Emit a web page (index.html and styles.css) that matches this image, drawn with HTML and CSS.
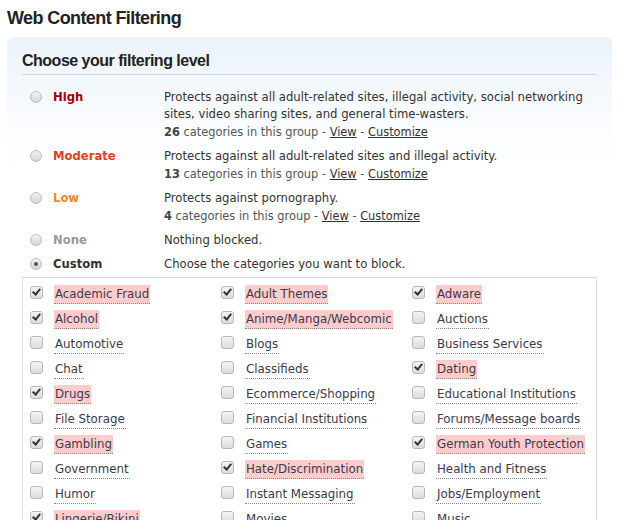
FILE: index.html
```html
<!DOCTYPE html>
<html>
<head>
<meta charset="utf-8">
<link rel="stylesheet" href="styles.css">
</head>
<body>
<h1 class="title">Web Content Filtering</h1>
<div class="panel">
  <h2 class="subtitle">Choose your filtering level</h2>
  <div class="levels">
    <div class="level">
      <span class="radio"></span>
      <span class="lname high">High</span>
      <div class="desc">
        <div class="dtext">Protects against all adult-related sites, illegal activity, social networking sites, video sharing sites, and general time-wasters.</div>
        <div class="meta"><b>26</b> categories in this group - <a>View</a> - <a>Customize</a></div>
      </div>
    </div>
    <div class="level">
      <span class="radio"></span>
      <span class="lname moderate">Moderate</span>
      <div class="desc">
        <div class="dtext">Protects against all adult-related sites and illegal activity.</div>
        <div class="meta"><b>13</b> categories in this group - <a>View</a> - <a>Customize</a></div>
      </div>
    </div>
    <div class="level">
      <span class="radio"></span>
      <span class="lname low">Low</span>
      <div class="desc">
        <div class="dtext">Protects against pornography.</div>
        <div class="meta"><b>4</b> categories in this group - <a>View</a> - <a>Customize</a></div>
      </div>
    </div>
    <div class="level">
      <span class="radio"></span>
      <span class="lname none">None</span>
      <div class="desc"><div class="dtext">Nothing blocked.</div></div>
    </div>
    <div class="level last">
      <span class="radio on"></span>
      <span class="lname custom">Custom</span>
      <div class="desc"><div class="dtext">Choose the categories you want to block.</div></div>
    </div>
  </div>
  <div class="cats">
    <div class="cat"><span class="cb on"></span><span class="cl sel">Academic Fraud</span></div>
    <div class="cat"><span class="cb on"></span><span class="cl sel">Adult Themes</span></div>
    <div class="cat"><span class="cb on"></span><span class="cl sel">Adware</span></div>
    <div class="cat"><span class="cb on"></span><span class="cl sel">Alcohol</span></div>
    <div class="cat"><span class="cb on"></span><span class="cl sel">Anime/Manga/Webcomic</span></div>
    <div class="cat"><span class="cb"></span><span class="cl">Auctions</span></div>
    <div class="cat"><span class="cb"></span><span class="cl">Automotive</span></div>
    <div class="cat"><span class="cb"></span><span class="cl">Blogs</span></div>
    <div class="cat"><span class="cb"></span><span class="cl">Business Services</span></div>
    <div class="cat"><span class="cb"></span><span class="cl">Chat</span></div>
    <div class="cat"><span class="cb"></span><span class="cl">Classifieds</span></div>
    <div class="cat"><span class="cb on"></span><span class="cl sel">Dating</span></div>
    <div class="cat"><span class="cb on"></span><span class="cl sel">Drugs</span></div>
    <div class="cat"><span class="cb"></span><span class="cl">Ecommerce/Shopping</span></div>
    <div class="cat"><span class="cb"></span><span class="cl">Educational Institutions</span></div>
    <div class="cat"><span class="cb"></span><span class="cl">File Storage</span></div>
    <div class="cat"><span class="cb"></span><span class="cl">Financial Institutions</span></div>
    <div class="cat"><span class="cb"></span><span class="cl">Forums/Message boards</span></div>
    <div class="cat"><span class="cb on"></span><span class="cl sel">Gambling</span></div>
    <div class="cat"><span class="cb"></span><span class="cl">Games</span></div>
    <div class="cat"><span class="cb on"></span><span class="cl sel">German Youth Protection</span></div>
    <div class="cat"><span class="cb"></span><span class="cl">Government</span></div>
    <div class="cat"><span class="cb on"></span><span class="cl sel">Hate/Discrimination</span></div>
    <div class="cat"><span class="cb"></span><span class="cl">Health and Fitness</span></div>
    <div class="cat"><span class="cb"></span><span class="cl">Humor</span></div>
    <div class="cat"><span class="cb"></span><span class="cl">Instant Messaging</span></div>
    <div class="cat"><span class="cb"></span><span class="cl">Jobs/Employment</span></div>
    <div class="cat"><span class="cb on"></span><span class="cl sel">Lingerie/Bikini</span></div>
    <div class="cat"><span class="cb"></span><span class="cl">Movies</span></div>
    <div class="cat"><span class="cb"></span><span class="cl">Music</span></div>
  </div>
</div>
</body>
</html>
```
FILE: styles.css
```css
html, body { margin: 0; padding: 0; background: #fff; }
body {
  padding: 0 13px 0 7px;
  font-family: "DejaVu Sans", Verdana, sans-serif;
  color: #333;
}
.title {
  font-family: "Liberation Sans", Arial, sans-serif;
  font-size: 18px;
  font-weight: bold;
  letter-spacing: -0.6px;
  color: #222;
  margin: 0;
  padding-top: 8px;
  line-height: 20px;
  height: 29px;
}
.panel {
  border-radius: 7px;
  background: linear-gradient(to bottom, #eaf2fb 0px, #fbfdff 90px, #ffffff 140px);
  padding: 14px 15px 0 15px;
}
.subtitle {
  font-family: "Liberation Sans", Arial, sans-serif;
  font-size: 16px;
  font-weight: bold;
  letter-spacing: -0.5px;
  color: #222;
  margin: 0;
  line-height: 19px;
  padding-bottom: 4px;
  border-bottom: 1px solid #d8d8d8;
}
.levels { padding-top: 14px; }
.level {
  display: grid;
  grid-template-columns: 31px 111px 1fr;
  align-items: start;
  margin-bottom: 8px;
}
.level.last { margin-bottom: 4px; }
.radio {
  width: 12px; height: 12px;
  margin: 2px 0 0 8px;
  border-radius: 50%;
  box-sizing: border-box;
  border: 1px solid #bdbdbd;
  background: linear-gradient(to bottom, #f2f2f2, #d6d6d6);
  position: relative;
}
.radio.on::after {
  content: "";
  position: absolute;
  left: 3px; top: 3px;
  width: 4px; height: 4px;
  border-radius: 50%;
  background: #555;
}
.lname {
  font-weight: bold;
  font-size: 11.6px;
  line-height: 16px;
}
.high { color: #a00000; }
.moderate { color: #e0401a; }
.low { color: #f08a1c; }
.none { color: #999; }
.custom { color: #333; }
.dtext { font-size: 11.65px; line-height: 16.5px; color: #333; }
.meta { font-size: 11.4px; line-height: 16px; color: #555; margin-top: 1.5px; }
.meta b { color: #444; }
.meta a { color: #333; text-decoration: underline; }
.cats {
  border: 1px solid #dcdcdc;
  border-bottom: none;
  display: grid;
  grid-template-columns: 191px 191px 1fr;
  padding: 4px 0 0 7px;
  background: #fff;
}
.cat {
  display: flex;
  align-items: center;
  height: 25px;
}
.cb {
  width: 13px; height: 13px;
  box-sizing: border-box;
  border: 1px solid #b8b8b8;
  border-radius: 3px;
  background: linear-gradient(to bottom, #f4f4f4, #dcdcdc);
  margin-right: 11px;
  margin-top: -4px;
  position: relative;
  flex: none;
}
.cb.on::after {
  content: "";
  position: absolute;
  left: 3px; top: 0px;
  width: 3px; height: 6px;
  border: solid #333;
  border-width: 0 2px 2px 0;
  transform: rotate(40deg);
}
.cl {
  font-size: 11.8px;
  line-height: 18px;
  color: #3a3a4a;
  border-bottom: 1px dotted #888;
  padding: 0 1px;
}
.cl.sel { background: #ffcccc; }
```
